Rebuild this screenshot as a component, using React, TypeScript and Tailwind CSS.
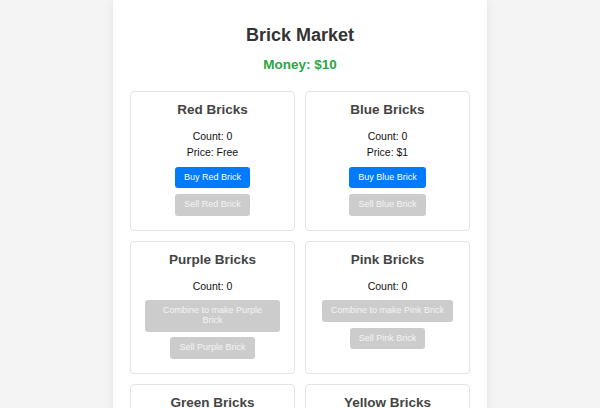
import React from "react";

type Brick = {
  name: string;
  price?: string;
  buy?: string;
  combine?: string;
  sell: string;
};

const bricks: Brick[] = [
  { name: "Red Bricks", price: "Free", buy: "Buy Red Brick", sell: "Sell Red Brick" },
  { name: "Blue Bricks", price: "$1", buy: "Buy Blue Brick", sell: "Sell Blue Brick" },
  { name: "Purple Bricks", combine: "Combine to make Purple Brick", sell: "Sell Purple Brick" },
  { name: "Pink Bricks", combine: "Combine to make Pink Brick", sell: "Sell Pink Brick" },
  { name: "Green Bricks", combine: "Combine to make Green Brick", sell: "Sell Green Brick" },
  { name: "Yellow Bricks", combine: "Combine to make Yellow Brick", sell: "Sell Yellow Brick" },
];

function Btn({ children, active }: { children: React.ReactNode; active?: boolean }) {
  return (
    <button
      className={
        active
          ? "rounded-[3px] bg-[#007bff] px-[9px] py-[6px] text-[9px] leading-[9.6px] text-white"
          : "rounded-[3px] bg-[#cccccc] px-[9px] py-[6px] text-[9px] leading-[9.6px] text-[#f4f4f4]"
      }
    >
      {children}
    </button>
  );
}

function Card({ b }: { b: Brick }) {
  return (
    <div className="flex flex-col items-center rounded-[4px] border border-[#e4e4e4] bg-white px-[14px] pt-[10px] pb-[14.5px] text-center">
      <h3 className="text-[13.5px] leading-[16px] font-bold text-[#444]">{b.name}</h3>
      <p className="mt-[9.5px] text-[10.5px] leading-[16.4px] text-[#111]">Count: 0</p>
      {b.price && <p className="text-[10.5px] leading-[16.4px] text-[#111]">Price: {b.price}</p>}
      <div className="mt-[6.4px] flex flex-col items-center gap-[5.7px]">
        {b.buy && <Btn active>{b.buy}</Btn>}
        {b.combine && <Btn>{b.combine}</Btn>}
        <Btn>{b.sell}</Btn>
      </div>
    </div>
  );
}

export default function App() {
  return (
    <div className="min-h-screen bg-[#f4f4f4] font-['Liberation_Sans',Arial,sans-serif]">
      <div className="mx-auto w-[374px] bg-white px-[17px] pt-[25px] pb-[20px] shadow-[0_0_10px_rgba(0,0,0,0.08)]">
        <h1 className="text-center text-[18px] leading-[21px] font-bold text-[#333]">Brick Market</h1>
        <p className="mt-[11px] text-center text-[13.5px] leading-[16px] font-bold text-[#28a745]">Money: $10</p>
        <div className="mt-[18px] grid grid-cols-2 gap-[10px]">
          {bricks.map((b) => (
            <Card key={b.name} b={b} />
          ))}
        </div>
      </div>
    </div>
  );
}
